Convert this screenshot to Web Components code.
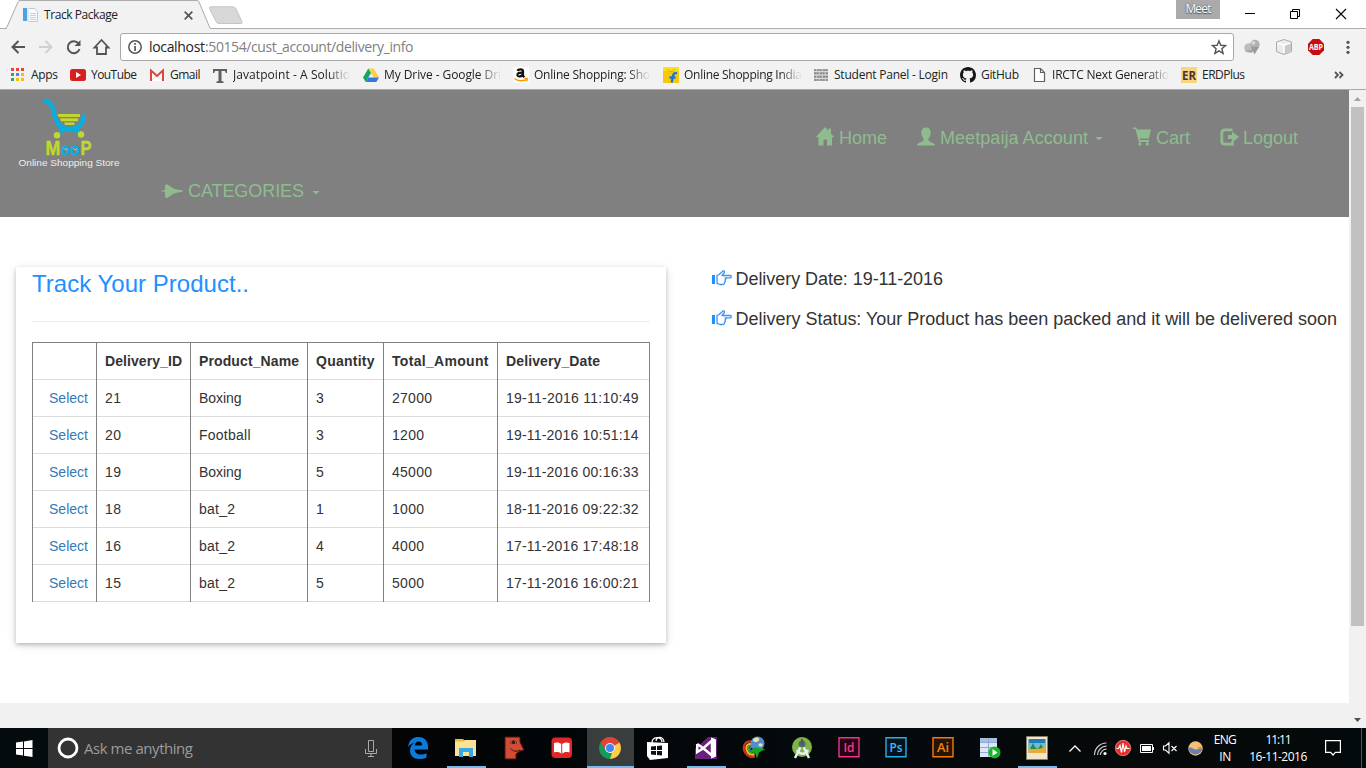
<!DOCTYPE html>
<html lang="en">
<head>
<meta charset="utf-8">
<title>Track Package</title>
<style>
html,body{margin:0;padding:0}
body{width:1366px;height:768px;overflow:hidden;background:#fff;font-family:"Liberation Sans",Arial,sans-serif}
</style>
</head>
<body>
<desktop-screen></desktop-screen>
<script>
class ShadowBase extends HTMLElement{
  constructor(){super();this.attachShadow({mode:'open'});}
  connectedCallback(){
    if(this.shadowRoot.childNodes.length)return;
    const t=document.createElement('template');
    t.innerHTML='<style>*{box-sizing:border-box}svg{display:block;flex:none;overflow:visible}'+this.css()+'</style>'+this.html();
    this.shadowRoot.appendChild(t.content.cloneNode(true));
    this.ready();
  }
  css(){return '';}
  html(){return '<slot></slot>';}
  ready(){}
}

/* Text run tracked so that it occupies a given width (attribute w). */
class FitText extends ShadowBase{
  css(){return ':host{display:inline-block;white-space:pre;flex:none}';}
  ready(){
    const w=+this.getAttribute('w'),n=this.textContent.length;
    if(!w)return;
    const nat=this.getBoundingClientRect().width;
    this.style.letterSpacing=((w-nat)/Math.max(1,n-1)).toFixed(3)+'px';
    this.style.width=w+'px';
  }
}
customElements.define('fit-text',FitText);

const ICONS={
 apps:`<svg width="16" height="16"><g><path fill="#ea4335" d="M1 1h3v3H1zM6 1h3v3H6zM11 1h3v3h-3z"/><path fill="#34a853" d="M1 6h3v3H1zM1 11h3v3H1z"/><path fill="#4285f4" d="M6 6h3v3H6z"/><path fill="#fbbc05" d="M11 6h3v3h-3zM6 11h3v3H6zM11 11h3v3h-3z"/></g></svg>`,
 youtube:`<svg width="16" height="16"><rect y="2" width="16" height="12" rx="2.5" fill="#d8201f"/><path fill="#fff" d="M6 5l5 3-5 3z"/></svg>`,
 gmail:`<svg width="16" height="16"><path fill="#f2f2f2" d="M1 3h14v10.500H1z"/><path fill="#fff" d="M3 5l5 4 5-4v9H3z"/><path fill="none" stroke="#ccc" stroke-width=".6" d="M3 13l4-4M13 13L9 9"/><path fill="none" stroke="#d9483b" stroke-width="2" d="M2 14V3.500l6 5.500 6-5.500V14"/></svg>`,
 tee:`<svg width="16" height="16"><path fill="#606060" d="M1 2h14v4h-1.200L13 4h-3.500v10l2 .5V16H4.500v-1.500l2-.5V4H3l-.8 2H1z"/></svg>`,
 drive:`<svg width="16" height="16"><path fill="#ffcf48" d="M5.300 1.500h5.400L16 10.500h-5.400z"/><path fill="#11a861" d="M5.300 1.500L8 6 2.700 15 0 10.500z"/><path fill="#3777e3" d="M5.300 10.500H16L13.300 15H2.700z"/></svg>`,
 amazon:`<svg width="16" height="16"><rect width="16" height="16" rx="2" fill="#fff"/><path fill="none" stroke="#111" stroke-width="2.200" d="M4.700 4c.5-2 5.300-2.200 5.300.3v4.500l1.300 1.400M10 5.700C4.500 5.400 4.200 7 4.500 8.300 5 10.200 9 9.700 10 7"/><path fill="none" stroke="#f90" stroke-width="1.500" d="M1.500 11.500c3.500 3 8.500 3 12 .8M11.500 11.500l2.800.2-.8 2.600"/></svg>`,
 flipkart:`<svg width="16" height="16"><rect width="16" height="16" rx="1" fill="#ffdc1c"/><path fill="#f6c80b" d="M0 4h16v12H0z"/><path stroke="#c9a400" fill="none" stroke-width=".8" d="M4 2c1 3 7 3 8 0"/><path fill="none" stroke="#1c72d6" stroke-width="2.300" d="M14 6.200c-3-.7-3.500.8-4 3L8.700 15.500M6.500 10.500h6"/></svg>`,
 globe:`<svg width="16" height="16"><rect x="1" y="2" width="14" height="12" fill="#a6a6a6"/><path stroke="#e4e4e4" stroke-width=".8" fill="none" d="M1 4.500h14M1 8h14M1 11.500h14M4 2v2.500M9 2v2.500M6 4.500V8M12 4.500V8M4 8v3.500M9 8v3.500M6 11.500V14M12 11.500V14"/><path stroke="#808080" stroke-width=".9" stroke-dasharray="2 1" fill="none" d="M1 3.200h14M1 6.300h14M1 9.800h14M1 13h14"/></svg>`,
 github:`<svg width="16" height="16"><path fill="#181818" fill-rule="evenodd" d="M8 0C3.580 0 0 3.580 0 8c0 3.540 2.290 6.530 5.470 7.590.4.070.55-.17.55-.38 0-.19-.01-.82-.01-1.490-2.010.37-2.530-.49-2.690-.94-.09-.23-.48-.94-.82-1.130-.28-.15-.68-.52-.01-.53.63-.01 1.080.58 1.230.82.72 1.210 1.870.87 2.330.66.070-.52.28-.87.51-1.070-1.780-.2-3.640-.89-3.640-3.950 0-.87.31-1.590.82-2.150-.08-.2-.36-1.020.08-2.120 0 0 .67-.21 2.200.82.64-.18 1.320-.27 2-.27s1.360.09 2 .27c1.530-1.040 2.200-.82 2.200-.82.44 1.100.16 1.920.08 2.120.51.56.82 1.270.82 2.150 0 3.070-1.870 3.750-3.650 3.950.29.25.54.73.54 1.480 0 1.070-.01 1.930-.01 2.200 0 .21.15.46.55.38A8.010 8.010 0 0 0 16 8c0-4.420-3.580-8-8-8z"/></svg>`,
 file:`<svg width="16" height="16"><path fill="#fff" stroke="#5f5f5f" stroke-width="1.200" d="M3.500 1.500h6l4 4v9h-10z"/><path fill="none" stroke="#5f5f5f" stroke-width="1.200" d="M9.500 1.500v4h4"/></svg>`,
 er:`<svg width="16" height="16"><rect width="16" height="16" fill="#fad57f"/><text x="1" y="12.500" font-family="Open Sans,sans-serif" font-weight="700" font-size="12" textLength="14" lengthAdjust="spacingAndGlyphs" fill="#4b3434">ER</text></svg>`,
 home:`<svg width="18" height="20"><path d="M9 0l9.300 10.200H16V18.500h-5v-6H7.500v6H2.500v-8.300H-.3L9 .1zM12.500 1.500h2.500v5l-2.500-2z"/></svg>`,
 user:`<svg width="18" height="20"><path d="M9 .5c3 0 4.700 2 4.700 5 0 2-.8 4.500-2.300 6v1.500c0 .7.500 1 1.300 1.400 3 1.300 5.300 2.100 5.300 3.600v.6H0V18c0-1.500 2.300-2.300 5.300-3.600.8-.4 1.300-.7 1.300-1.400v-1.500c-1.500-1.500-2.300-4-2.300-6 0-3 1.700-5 4.700-5z"/></svg>`,
 cart:`<svg width="18" height="20"><path d="M0 .5h3.400l.8 2H18l-2.100 9H6.600l.5 1.500H16V15H6L2.300 2H0z"/><path d="M5.500 15.500h2.600v3H5.500zM13 15.500h2.600v3H13z"/></svg>`,
 logout:`<svg width="20" height="20" style="margin-right:-2px"><path fill="none" stroke="#8fbc8f" stroke-width="2.800" d="M12.500 2.800H5q-3.200 0-3.200 3v8.400q0 3 3.200 3h7.500v-3"/><path d="M12 4.500l7 5.500-7 5.500v-3.500H8V8h4z"/></svg>`,
 jet:`<svg width="22" height="16"><path d="M0 8c2-.9 3-.7 4-1L4 2l2-.8 7 4.500 5 1.300h2v2.300H18l-5 1.300L6 15l-2-.8V9C3 8.700 2 8.900 0 8z"/><path d="M19.500 7h2v2h-2z"/></svg>`,
 hand:`<svg width="20" height="18"><path fill="#1e90ff" d="M0 5h3v9H0z"/><path fill="none" stroke="#3b93f3" stroke-width="1.300" stroke-linejoin="round" d="M5 5.500l2-1 4-3.500c1.500-.7 2 1 1 2l-2 2.500h8.300c1.300 0 1.300 2.300 0 2.300H13c1.500 1 1 2-.2 2.300 1 1 .5 2-.4 2.200.5 1-.2 2.200-1.400 2.200H8l-3-1.200z"/></svg>`,
 edge:`<svg width="22" height="24"><path fill="#0a7bdc" d="M1 11C2 3.500 6.500 1 11.500 1 18 1 21 5.500 21 11v2.500H7.500c.3 3.500 3 5 6 5 2.500 0 4.500-.7 6-1.600v4.600c-2 1-4.300 1.500-7 1.500C6.500 23 3 19.500 3 14.500c0-4 2.300-6.600 5-8C5 7.200 2.500 8.700 1 11zm6.700-1.500H15C15 7 14 5.500 11.600 5.500c-2.300 0-3.600 1.800-3.900 4z"/></svg>`,
 folder:`<svg width="24" height="24"><path fill="#e9b93d" d="M1 3h8l2 2h11v3H1z"/><path fill="#fbe295" d="M1 5.500h8L11 4h11v16H1z"/><path fill="#f5c400" d="M2 3h6v1.500H2z"/><path fill="#38a9e4" d="M5 12h14v9h-4v-5H9v5H5z"/></svg>`,
 face:`<svg width="22" height="24"><path fill="#d24b32" stroke="#4b1410" d="M2 1h15v5l4 8-4 1-4 3v5H2z"/><path stroke="#311" fill="#f7b092" stroke-width=".8" d="M7 6.500c2-2 5-2 7 0-2 1.500-5 1.500-7 0z"/><circle cx="10.500" cy="6.200" r="1.600" fill="#222"/><path stroke="#3b0f0d" fill="none" d="M7.500 12.500c2.500 3 6 3.500 9.500 1.500"/></svg>`,
 book:`<svg width="22" height="24"><rect x=".5" y="1.500" width="20.500" height="20.500" rx="4" fill="#e22525"/><path fill="#fff" d="M3 7c3-1 5.500-.5 7.700 1.200C13 6.500 15.500 6 18.500 7v9.500c-3-.8-5.500-.4-7.800 1.200C8.500 16 6 15.700 3 16.500z"/><path stroke="#e22525" d="M10.700 8v9.500"/></svg>`,
 chrome:`<svg width="22" height="22" viewBox="0 0 22 22"><path fill="#df4437" d="M11 11L1.500 5.500a11 11 0 0 1 19 0z"/><path fill="#ffcd42" d="M11 11L20.500 5.500A11 11 0 0 1 11 22z"/><path fill="#109d59" d="M11 11v11A11 11 0 0 1 1.500 5.500z"/><path fill="#109d59" d="M1.500 5.500L8 16l5 0-2 6-4-1z"/><path fill="#df4437" d="M1.500 5.500L6.500 13 11 6h9.700l-1-1.700L7 3z"/><circle cx="11" cy="11" r="5" fill="#f4f4f4"/><circle cx="11" cy="11" r="4" fill="#4286f5"/></svg>`,
 store:`<svg width="22" height="24"><path fill="none" stroke="#fff" stroke-width="1.300" d="M5 7c0-7 10-7 10-1M9 5c1-5 7-5 8 1"/><path fill="#fff" d="M0 6l21 1v15L3 24 0 20z"/><path fill="#111" d="M4 10.500l5-.5v4H4zM10 10l5-.5V14h-5zM4 15h5v4l-5-.5zM10 15h5v4.500L10 19z"/></svg>`,
 vs:`<svg width="22" height="24"><path fill="#68217a" d="M0 13L13 1h9v22H0z"/><path fill="none" stroke="#fff" stroke-width="2.500" d="M2.200 8v8L8 12.500 17 4.500v15L8 12 2.200 8"/><path fill="#fff" d="M16 1.500l5 2v17l-5 2z"/></svg>`,
 idm:`<svg width="24" height="24"><path fill="none" stroke="#d52f22" stroke-width="2.200" d="M9 5.500C2 5 0 12 3.500 17c2.500 4 6 4.500 9.500 3.500"/><path fill="none" stroke="#f8c11a" stroke-width="2" d="M9 7.700C4 7.700 3 12.500 5.500 16c2 3 5 3 7 2.500"/><path fill="none" stroke="#47b04a" stroke-width="1.600" d="M9.500 9.500c-4 0-4.200 3.500-2.400 6 1.500 2 3.500 2 5.500 1.500"/><path fill="none" stroke="#4f8be0" stroke-width="1.300" d="M10 11c-2.500 0-3 2-1.500 3.700"/><circle cx="15.500" cy="7.500" r="7" fill="#4f8fd0"/><path fill="#e6dfa6" d="M11 3.500c2-2.500 5-2.500 6-1s-1 3.500-3 3.500-3-.5-3-2.500zM16.500 8c2-1.500 5-.5 4 1.500s-4.500 1.500-4-1.500z"/><path fill="#16a627" d="M12 11.500l11.500 1.500-6.500 3.500-2 6-2-5.500-5.500-1.500z"/></svg>`,
 android:`<svg width="22" height="24"><circle cx="11" cy="11" r="10" fill="#7db444"/><path fill="none" stroke="#e9eef1" stroke-width="2.500" d="M10 10L4 22M12 10l6 12M6 14c3 5 8 5 11 0"/><circle cx="11" cy="8" r="3.500" fill="#56646b"/><path stroke="#4b5960" stroke-width="2" d="M11 3v5"/></svg>`,
 id:`<svg width="22" height="22"><path fill="#260312" stroke="#f0328a" stroke-width="1.400" d="M1 .7h20v19H1z"/><text x="5.500" y="15" font-family="Open Sans,sans-serif" font-size="12.500" font-weight="600" fill="#f43c8d" textLength="11" lengthAdjust="spacingAndGlyphs">Id</text></svg>`,
 ps:`<svg width="22" height="22"><path fill="#041220" stroke="#27aee5" stroke-width="1.400" d="M1 .7h20v19H1z"/><text x="4.500" y="15" font-family="Open Sans,sans-serif" font-size="12.500" font-weight="600" fill="#38c0f2" textLength="13" lengthAdjust="spacingAndGlyphs">Ps</text></svg>`,
 ai:`<svg width="22" height="22"><path fill="#261300" stroke="#f27a16" stroke-width="1.400" d="M1 .7h20v19H1z"/><text x="5" y="15" font-family="Open Sans,sans-serif" font-size="12.500" font-weight="600" fill="#f5831f" textLength="12" lengthAdjust="spacingAndGlyphs">Ai</text></svg>`,
 db:`<svg width="22" height="24"><path fill="#dde7f6" d="M1 2h17v19H1z"/><path fill="#a9bfe0" d="M1 2h17v4H1z"/><path stroke="#8fa9d2" fill="none" d="M1 6.500h17M1 11.500h17M1 16.500h17M9.500 2v19"/><circle cx="15.500" cy="16.500" r="6" fill="#16b625"/><path fill="#fff" d="M13.500 13l5 3.500-5 3.500z"/></svg>`,
 picture:`<svg width="22" height="24"><path fill="#f0e6cc" stroke="#887c66" d="M.5.5h21v23H.5z"/><path fill="#237db5" d="M2.500 3h17v14h-17z"/><path fill="#65c0dc" d="M2.500 7h17v5h-17z"/><path fill="#e8ad38" d="M2.500 12c5-1 7 1 10 0s4-2 7-1v6h-17z"/><path fill="#258d4d" d="M4 13l3-6 2 4 2 2zM12 13l3-5 2 4z"/></svg>`
};
class UiIcon extends ShadowBase{
  css(){return ':host{display:block;flex:none;fill:#8fbc8f}';}
  html(){return ICONS[this.getAttribute('name')]||'';}
}
customElements.define('ui-icon',UiIcon);

class TabStrip extends ShadowBase{
  css(){return `:host{display:flex;height:29px;background:linear-gradient(#fff 28px,#aeaeae 28px);font:12px "Open Sans","Noto Sans",sans-serif;color:#222}
  .tab{position:relative;width:212px;height:29px;display:flex;align-items:center;padding-left:23px}
  .bg{position:absolute;left:0;top:0}.tab>*:not(.bg){position:relative}
  fit-text{margin-left:6px;line-height:16px;margin-top:1px}.x{margin-left:66px;margin-top:1px}
  .new{margin:6px 0 0 -4px}.user{margin-left:932px;width:44px;height:19px;background:#aaa;color:#fff;text-align:center;line-height:18px;text-shadow:0 0 2px #555,0 1px 1px #555}
  .user fit-text{margin:0}
  .win{display:flex;margin-left:25px;gap:35px;height:27px;align-items:center}`;}
  html(){return `<div class="tab"><svg class="bg" width="212" height="29"><path fill="#f2f2f2" stroke="#ababab" d="M5 28.500q1.500-.5 2-1.500L18 2q.5-1.500 2-1.500h177q1.500 0 2 1.500l10.500 25q.5 1.500 2 1.500"/><path fill="#f2f2f2" d="M7 28h203v1H7z"/></svg>
  <svg width="15" height="16"><path fill="#4aa3dc" d="M0 1h4v13H0z"/><path fill="#f8fbfd" stroke="#bccbd6" d="M5.500 1.500h6l3 3v10h-9z"/><path stroke="#c5d2da" d="M7 6.500h6M7 8.500h6M7 10.500h6M7 12.500h6"/><path fill="#e0e8ee" d="M4 1h2v13H4z"/></svg>
  <fit-text w="74">Track Package</fit-text><svg class="x" width="9" height="9"><path stroke="#555" stroke-width="1.700" d="M.7.700l7.600 7.600M8.300.7L.7 8.300"/></svg></div>
  <svg class="new" width="36" height="18"><path fill="#d8d8d8" stroke="#c5c5c5" d="M3 .8h22q2 0 3 2l6 13q.5 1.700-1 1.700H11q-2 0-3-2L1.500 2.500Q1 .8 3 .8z"/></svg>
  <div class="user"><fit-text w="26">Meet</fit-text></div>
  <div class="win"><svg width="10" height="11"><path stroke="#000" d="M0 5.500h10"/></svg><svg width="10" height="10"><path fill="none" stroke="#000" d="M.5 2.500h7v7h-7zM2.500 2.500v-2h7v7h-2"/></svg><svg width="11" height="10" style="margin-left:1px"><path stroke="#000" stroke-width="1.100" d="M0 0l10 10M10 0L0 10"/></svg></div>`;}
}
customElements.define('tab-strip',TabStrip);

class AddressBar extends ShadowBase{
  css(){return `:host{display:flex;height:33px;background:#f2f2f2;padding-top:4px;padding-left:11px;font:14px "Open Sans","Noto Sans",sans-serif;color:#222}
  .nav{display:flex;gap:12px;width:109px;height:28px;align-items:center}
  .field{display:flex;align-items:center;width:1114px;height:28px;border:1px solid #a9a9a9;border-radius:3px;background:#fff;padding:0 7px}
  .field fit-text{line-height:20px}.h{margin-left:7px}.p{color:#808080}.star{margin-left:auto}
  .ext{display:flex;align-items:center;height:28px;margin-left:10px}`;}
  html(){return `<div class="nav">
  <svg width="15" height="14"><path fill="none" stroke="#555" stroke-width="2" d="M14 7H2M7.500 1L1.500 7l6 6"/></svg>
  <svg width="16" height="14"><path fill="none" stroke="#d0d0d0" stroke-width="2" d="M1 7h12M7.500 1l6 6-6 6"/></svg>
  <svg width="15" height="16"><path fill="none" stroke="#555" stroke-width="2" d="M12.500 4.500A6 6 0 1 0 13.500 10"/><path fill="#555" d="M14.500 1v6h-6z"/></svg>
  <svg width="17" height="16"><path fill="none" stroke="#555" stroke-width="1.800" d="M1.500 8.500L8.500 1l7 7.500H13V15H4V8.500z"/></svg></div>
  <div class="field"><svg width="14" height="14"><circle cx="7" cy="7" r="6.200" fill="none" stroke="#555" stroke-width="1.500"/><path fill="#555" d="M6.200 3h1.700v1.700H6.200zM6.200 6h1.700v5H6.200z"/></svg>
  <fit-text class="h" w="56">localhost</fit-text><fit-text class="p" w="208.500">:50154/cust_account/delivery_info</fit-text>
  <svg class="star" width="15" height="15"><path fill="none" stroke="#555" stroke-width="1.400" d="M8 .9l1.800 4.400 4.700.3-3.600 3.100 1.200 4.700-4.100-2.600-4.100 2.600 1.200-4.700L1.500 5.600l4.700-.3z"/></svg></div>
  <div class="ext"><svg width="16" height="16"><circle cx="5" cy="9" r="4.800" fill="#bdbdbd"/><path fill="#a2a2a2" d="M1 11l7 3 1-3z"/><circle cx="11" cy="5.500" r="4.700" fill="#b0b0b0"/><path fill="#999" d="M7 8h8l-4.500 7.500z"/><circle cx="9.500" cy="4" r="2" fill="#d5d5d5"/></svg>
  <svg style="margin-left:16px" width="16" height="16"><path fill="#ececec" stroke="#aaa" d="M8 .5l7.500 2.500v9.500L8 15.500.5 12.500V3z"/><path fill="#c9c9c9" d="M8 6l7-2.700V12l-7 3z"/><path fill="none" stroke="#fff" stroke-width="1.500" d="M1.500 4L8 6.200 14.500 4M8 6v8"/></svg>
  <svg style="margin-left:16px" width="16" height="16"><path fill="#c70d0d" d="M4.700 0h6.600L16 4.700v6.600L11.300 16H4.700L0 11.300V4.700z"/><text x="1" y="10.800" font-family="Open Sans,sans-serif" font-weight="700" font-size="8" textLength="14" lengthAdjust="spacingAndGlyphs" fill="#fff">ABP</text></svg>
  <svg style="margin-left:22px" width="4" height="14"><g fill="#555"><circle cx="2" cy="2.300" r="1.600"/><circle cx="2" cy="7.300" r="1.600"/><circle cx="2" cy="12.300" r="1.600"/></g></svg></div>`;}
}
customElements.define('address-bar',AddressBar);

class BookmarkItem extends ShadowBase{
  css(){return `:host{display:flex;align-items:center;gap:5px;flex:none;height:26px}
  fit-text{line-height:16px}:host([fade]) fit-text{-webkit-mask-image:linear-gradient(90deg,#000 calc(100% - 22px),transparent);mask-image:linear-gradient(90deg,#000 calc(100% - 22px),transparent)}`;}
  html(){return `<ui-icon name="${this.getAttribute('icon')}"></ui-icon><fit-text w="${this.getAttribute('w')}">${this.getAttribute('label')}</fit-text>`;}
}
customElements.define('bookmark-item',BookmarkItem);

const MARKS=[['apps','Apps',27,60],['youtube','YouTube',46,79],['gmail','Gmail',30.5,63],['tee','Javatpoint - A Solutio',117,151,1],['drive','My Drive - Google Dri',117,150,1],['amazon','Online Shopping: Sho',116,150,1],['flipkart','Online Shopping India',118,150,1],['globe','Student Panel - Login',114,147],['github','GitHub',38,71],['file','IRCTC Next Generatio',117,150,1],['er','ERDPlus',43,153]];
class BookmarksBar extends ShadowBase{
  css(){return `:host{display:flex;height:28px;background:#f2f2f2;border-bottom:1px solid #a9a9a9;padding-left:10px;font:12px "Open Sans","Noto Sans",sans-serif;color:#222}.more{margin-top:9px}`;}
  html(){return MARKS.map(m=>`<bookmark-item icon="${m[0]}" label="${m[1]}" w="${m[2]}" style="width:${m[3]}px"${m[4]?' fade':''}></bookmark-item>`).join('')+`<svg class="more" width="10" height="8"><path fill="none" stroke="#555" stroke-width="1.800" d="M1 1l3 3-3 3M5.500 1l3 3-3 3"/></svg>`;}
}
customElements.define('bookmarks-bar',BookmarksBar);

class StoreLogo extends ShadowBase{
  css(){return ':host{display:block;width:120px;height:80px;flex:none}';}
  html(){return `<svg width="120" height="80"><g fill="none" stroke="#0aaede">
  <path stroke-width="4.500" d="M44 10.500c8 2 9 6 10 13 2 9 7 15.500 15 15.500 9 0 14-4 15-14.500"/><path stroke-width="4" d="M59 43c5-5 15-5 20 0"/></g>
  <g fill="#c1d72f"><path d="M57.500 24h22.500v3H58.500zM60 28.300h18v2.900H61zM64 32.500h10.500v2.500H65z"/><circle cx="57" cy="45.200" r="3.200"/><circle cx="81" cy="44.500" r="3.200"/></g>
  <g font-family="Liberation Sans,Arial,sans-serif" font-weight="700"><text x="45.500" y="64.700" font-size="19.500" fill="#c1d72f" stroke="#c1d72f" stroke-width=".4" textLength="14.800" lengthAdjust="spacingAndGlyphs">M</text><text x="60.700" y="64.700" font-size="16" fill="#0aaede" stroke="#0aaede" stroke-width=".5" textLength="19.300" lengthAdjust="spacingAndGlyphs">oo</text><text x="80.400" y="64.700" font-size="19.500" fill="#c1d72f" stroke="#c1d72f" stroke-width=".4" textLength="11" lengthAdjust="spacingAndGlyphs">P</text></g>
  <path fill="none" stroke="#8adcf2" stroke-width=".9" d="M63.500 58l2 2 2-1.500M73 58l2 2 2-1.500"/>
  <text x="18.500" y="75.500" font-family="Liberation Sans,Arial,sans-serif" font-size="9.500" fill="#eee" textLength="101" lengthAdjust="spacingAndGlyphs">Online Shopping Store</text></svg>`;}
}
customElements.define('store-logo',StoreLogo);

class NavLink extends ShadowBase{
  css(){return `:host{display:flex;align-items:center;gap:5px;color:#8fbc8f;font-size:18px;line-height:20px}
  fit-text{margin-top:var(--text-drop,0px)}
  .caret{width:8px;height:4px;margin-left:var(--caret-gap,2px);margin-top:3px;background:#8fbc8f;clip-path:polygon(0 0,100% 0,50% 100%)}`;}
  html(){return `<ui-icon name="${this.getAttribute('icon')}"></ui-icon><fit-text w="${this.getAttribute('w')}">${this.getAttribute('label')}</fit-text>${this.hasAttribute('menu')?'<span class="caret"></span>':''}`;}
}
customElements.define('nav-link',NavLink);

class SiteHeader extends ShadowBase{
  css(){return `:host{display:block;height:127px;background:#808080}
  .top{display:flex;justify-content:space-between;height:90px}
  nav{display:flex;gap:30px;padding:36px 51px 0 0;align-items:flex-start;--text-drop:2px}
  .cat{padding:1px 0 0 161px;display:flex;--caret-gap:3px}`;}
  html(){return `<div class="top"><store-logo></store-logo><nav><nav-link icon="home" label="Home" w="48"></nav-link><nav-link icon="user" label="Meetpaija Account" w="148" menu></nav-link><nav-link icon="cart" label="Cart" w="34"></nav-link><nav-link icon="logout" label="Logout" w="55"></nav-link></nav></div>
  <div class="cat"><nav-link icon="jet" label="CATEGORIES" w="116" menu></nav-link></div>`;}
}
customElements.define('site-header',SiteHeader);

const ROWS=[['21','Boxing','3','27000','19-11-2016 11:10:49'],['20','Football','3','1200','19-11-2016 10:51:14'],['19','Boxing','5','45000','19-11-2016 00:16:33'],['18','bat_2','1','1000','18-11-2016 09:22:32'],['16','bat_2','4','4000','17-11-2016 17:48:18'],['15','bat_2','5','5000','17-11-2016 16:00:21']];
const HEADS=[['Delivery_ID',77],['Product_Name',100],['Quantity',58.5],['Total_Amount',96.5],['Delivery_Date',94]];
const WIDTHS={Boxing:42.5,Football:51.5,bat_2:36};
class DeliveryTable extends ShadowBase{
  css(){return `:host{display:block;font-size:14px;color:#333}
  .grid{display:grid;grid-template-columns:64px 94px 117px 76px 114px 153px;grid-auto-rows:37px;border-top:1px solid #808080}
  .c{position:relative;padding:8px 8px 0;line-height:20px;border-left:1px solid #808080;background:linear-gradient(#ddd,#ddd) 0 100%/100% 1px no-repeat}
  .c:nth-child(6n){border-right:1px solid #808080}.h{font-weight:700}.s{text-align:right;color:#337ab7}`;}
  html(){
    const head='<div class="c"></div>'+HEADS.map(h=>`<div class="c h"><fit-text w="${h[1]}">${h[0]}</fit-text></div>`).join('');
    const cell=v=>`<div class="c"><fit-text w="${WIDTHS[v]||(v.length>10?132.5:v.length*8)}">${v}</fit-text></div>`;
    return '<div class="grid">'+head+ROWS.map(r=>'<div class="c s"><fit-text w="39">Select</fit-text></div>'+r.map(cell).join('')).join('')+'</div>';
  }
}
customElements.define('delivery-table',DeliveryTable);

class TrackCard extends ShadowBase{
  css(){return `:host{display:block;width:650px;height:376px;padding:0 16px;background:#fff;box-shadow:0 2px 4px rgba(0,0,0,.2),0 2px 10px rgba(0,0,0,.12);flex:none}
  h3{margin:0;padding-top:3px;height:54px;font-size:24px;font-weight:400;line-height:28px;color:#1e90ff}
  hr{border:0;height:1px;background:#eee;margin:0 0 20px}`;}
  html(){return '<h3><fit-text w="217">Track Your Product..</fit-text></h3><hr><slot></slot>';}
}
customElements.define('track-card',TrackCard);

class DeliveryNote extends ShadowBase{
  css(){return ':host{display:flex;gap:3.5px;height:20px;align-items:center;font-size:18px;line-height:20px;color:#333}';}
  html(){return `<ui-icon name="hand"></ui-icon><fit-text w="${this.getAttribute('w')}">${this.getAttribute('text')}</fit-text>`;}
}
customElements.define('delivery-note',DeliveryNote);

class BrowserViewport extends ShadowBase{
  css(){return `:host{display:flex;height:638px;background:#fff}
  .page{width:1349px;display:flex;flex-direction:column}
  main{flex:1;display:flex;padding:50px 0 0 16px;align-items:flex-start;gap:46px}
  .notes{display:flex;flex-direction:column;gap:20px;padding-top:2px}
  footer{height:25px;background:#f1f1f1}
  .bar{width:17px;background:#f1f1f1;display:flex;flex-direction:column;align-items:center;padding:7px 0 6px}
  .thumb{width:13px;height:519px;background:#c1c1c1;margin-top:6px}.dn{margin-top:auto}`;}
  html(){return `<div class="page"><site-header></site-header><main><track-card><delivery-table></delivery-table></track-card>
  <div class="notes"><delivery-note text="Delivery Date: 19-11-2016" w="207.500"></delivery-note><delivery-note text="Delivery Status: Your Product has been packed and it will be delivered soon" w="601.500"></delivery-note></div></main><footer></footer></div>
  <div class="bar"><svg width="7" height="4"><path fill="#a3a3a3" d="M0 4L3.500 0 7 4z"/></svg><div class="thumb"></div><svg class="dn" width="7" height="4"><path fill="#505050" d="M0 0h7L3.500 4z"/></svg></div>`;}
}
customElements.define('browser-viewport',BrowserViewport);

const APPS=[['edge'],['folder',39],['face'],['book'],['chrome',47,1],['store'],['vs',39],['idm'],['android'],['id'],['ps'],['ai'],['db'],['picture',39]];
class TaskBar extends ShadowBase{
  css(){return `:host{display:flex;height:40px;background:linear-gradient(90deg,#050c0d,#020405 30%,#04090c 60%,#07090a 84%,#030a0b);font:12px "Open Sans","Noto Sans",sans-serif;color:#fff}
  .start{width:48px;display:flex;align-items:center;justify-content:center}
  .search{width:344px;background:#333;display:flex;align-items:center;padding-left:9px;color:#9b9b9b;font-size:15px;margin-right:2px}
  .search fit-text{margin-left:5px;line-height:20px}.mic{margin-left:172px}
  .app{width:48px;display:flex;align-items:center;justify-content:center;flex:none;position:relative}.app:nth-of-type(n+12){width:47px;padding-right:1px}
  .on{background:linear-gradient(#393d3e,#393d3e) 50% 0/47px 100% no-repeat}.app i{position:absolute;bottom:0;height:2px;background:#76b9ed}
  .tray{display:flex;align-items:center;margin-left:8px}.lang{text-align:center;line-height:17px;width:24px;margin-left:10px}.clock{text-align:center;line-height:17px;width:60px;margin-left:11px}
  .msg{margin-left:17px}.edge{width:1px;height:40px;background:#555;margin-left:20px}`;}
  html(){return `<div class="start"><svg width="17" height="17"><path fill="#fff" d="M0 2.500L7 1.500V8H0zM8 1.400L16.500 0v8H8zM0 9h7v6.500l-7-1zM8 9h8.500v8L8 15.700z"/></svg></div>
  <div class="search"><svg width="22" height="22"><circle cx="11" cy="11" r="9" fill="none" stroke="#fff" stroke-width="2.800"/></svg><fit-text w="109">Ask me anything</fit-text><svg class="mic" width="12" height="17"><path fill="none" stroke="#aaa" d="M3.500.5h5v11h-5zM.5 9v4.500h11V9M6 14v2.500M3 16.500h6"/></svg></div>
  ${APPS.map(a=>`<div class="app${a[2]?' on':''}"><ui-icon name="${a[0]}"></ui-icon>${a[1]?`<i style="width:${a[1]}px"></i>`:''}</div>`).join('')}
  <div class="tray"><svg width="12" height="7"><path fill="none" stroke="#fff" stroke-width="1.300" d="M.5 6.500L6 1l5.500 5.500"/></svg>
  <svg style="margin-left:13px" width="12" height="13"><g fill="none" stroke="#ccc" stroke-width="1.200"><path d="M.5 13A12 12 0 0 1 12.500 1M3.500 13A9 9 0 0 1 12.500 4.200M6.400 13A6 6 0 0 1 12.500 7.200"/></g><circle cx="11" cy="11.500" r="1.600" fill="#fff"/></svg>
  <svg style="margin-left:9px" width="16" height="16"><circle cx="8" cy="8" r="7.700" fill="#ea2f2b" stroke="#f7a09d" stroke-width=".7"/><path fill="none" stroke="#fff" stroke-width="1.200" d="M1.500 8.500h2l1.500-3 1.500 7L8 3l1.500 9 1.500-6 1 2.500h2.500"/></svg>
  <svg style="margin-left:9px" width="15" height="9"><path fill="none" stroke="#fff" d="M.5.500h12v8H.5zM13.500 3v3"/><path fill="#fff" d="M2 2h9v5H2z"/></svg>
  <svg style="margin-left:8px" width="14" height="12"><path fill="none" stroke="#fff" stroke-width="1.100" d="M.5 4h2L6 .8v10.400L2.500 8h-2zM8.500 4l5 5M13.500 4l-5 5"/></svg>
  <svg style="margin-left:11px" width="15" height="15"><circle cx="7.500" cy="7.500" r="7.200" fill="#f5c175"/><path fill="#6b7fb3" d="M.5 7c3-2 5 2 8 1.500 3-.7 4-2.500 6-1a7.100 7.100 0 0 1-14 0z"/><path fill="#ef8e38" d="M9 7l4-2 .7 3z"/></svg>
  <div class="lang"><fit-text w="23">ENG</fit-text><br><fit-text w="12">IN</fit-text></div><div class="clock"><fit-text w="26">11:11</fit-text><br><fit-text w="58">16-11-2016</fit-text></div>
  <svg class="msg" width="16" height="16"><path fill="none" stroke="#fff" stroke-width="1.200" d="M.6.600h14.800v11.800h-5L8 15l-2.400-2.600h-5z"/></svg><span class="edge"></span></div>`;}
}
customElements.define('task-bar',TaskBar);

class DesktopScreen extends ShadowBase{
  css(){return ':host{display:flex;flex-direction:column;width:1366px;height:768px;overflow:hidden}';}
  html(){return '<tab-strip></tab-strip><address-bar></address-bar><bookmarks-bar></bookmarks-bar><browser-viewport></browser-viewport><task-bar></task-bar>';}
}
customElements.define('desktop-screen',DesktopScreen);
</script>
</body>
</html>
